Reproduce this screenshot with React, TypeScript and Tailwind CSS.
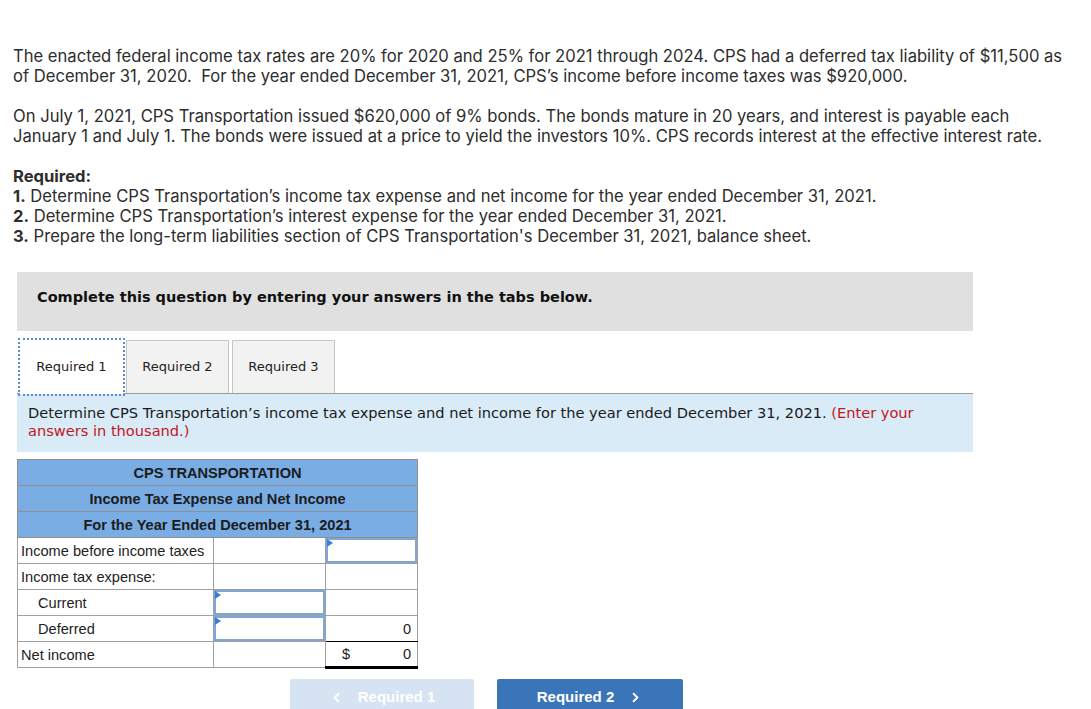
import { ReactNode } from "react";
import { ChevronLeft, ChevronRight } from "lucide-react";

function InputCell() {
  return (
    <div className="relative h-[25px] w-full border-2 border-[#7fa7d6] bg-white">
      <span className="absolute left-[-1px] top-[-1px] h-0 w-0 border-y-[4px] border-l-[6px] border-y-transparent border-l-[#3b7fd4]" />
    </div>
  );
}

function Row({
  label,
  indent,
  mid,
  right,
  rightClass = "border-[#a0a0a0]",
}: {
  label: string;
  indent?: boolean;
  mid?: ReactNode;
  right?: ReactNode;
  rightClass?: string;
}) {
  return (
    <tr className="h-[26px]">
      <td className={`border border-[#a0a0a0] py-0 ${indent ? "pl-[20px]" : "pl-[3px]"}`}>{label}</td>
      <td className="border border-[#a0a0a0] p-0">{mid}</td>
      <td className={`border p-0 ${rightClass}`}>{right}</td>
    </tr>
  );
}

export default function App() {
  return (
    <div className="min-h-screen bg-white pt-[46px] text-[#2d2d2d]">
      <div className="px-[13px] font-['Inter',sans-serif] text-[16.6px] leading-[20px]">
        <p className="whitespace-nowrap">
          The enacted federal income tax rates are 20% for 2020 and 25% for 2021 through 2024. CPS had a deferred tax liability of $11,500 as
          <br />
          of December 31, 2020.&nbsp; For the year ended December 31, 2021, CPS’s income before income taxes was $920,000.
        </p>
        <p className="mt-[20px] whitespace-nowrap">
          On July 1, 2021, CPS Transportation issued $620,000 of 9% bonds. The bonds mature in 20 years, and interest is payable each
          <br />
          January 1 and July 1. The bonds were issued at a price to yield the investors 10%. CPS records interest at the effective interest rate.
        </p>
        <div className="mt-[20px] whitespace-nowrap">
          <p className="font-bold">Required:</p>
          <p>
            <b>1.</b> Determine CPS Transportation’s income tax expense and net income for the year ended December 31, 2021.
          </p>
          <p>
            <b>2.</b> Determine CPS Transportation’s interest expense for the year ended December 31, 2021.
          </p>
          <p>
            <b>3.</b> Prepare the long-term liabilities section of CPS Transportation's December 31, 2021, balance sheet.
          </p>
        </div>
      </div>

      <div className="ml-[17px] w-[956px]">
        <div className="mt-[26px] h-[59px] bg-[#e0e0e0] pl-[20px] pt-[15px] font-['DejaVu_Sans',sans-serif] text-[14.5px] font-bold text-[#111]">
          Complete this question by entering your answers in the tabs below.
        </div>

        <div className="mt-[9px] flex items-end gap-[3px] pl-[3px] font-['DejaVu_Sans',sans-serif] text-[13px] text-[#222]">
          <div className="relative z-10 -mb-px flex h-[54px] w-[103px] items-center justify-center bg-white outline-2 outline-offset-0 outline-dotted outline-[#5b8fd0]">
            Required 1
          </div>
          <div className="flex h-[53px] w-[103px] items-center justify-center border border-b-0 border-[#c6c6c6] bg-[#f2f2f2]">
            Required 2
          </div>
          <div className="flex h-[53px] w-[103px] items-center justify-center border border-b-0 border-[#c6c6c6] bg-[#f2f2f2]">
            Required 3
          </div>
        </div>

        <div className="h-[59px] border-t border-[#9a9a9a] bg-[#daebf8] px-[11px] pt-[10px] font-['DejaVu_Sans',sans-serif] text-[14.6px] leading-[18px] text-[#1a1a1a]">
          Determine CPS Transportation’s income tax expense and net income for the year ended December 31, 2021.{" "}
          <span className="text-[#c0161c]">(Enter your answers in thousand.)</span>
        </div>

        <table className="mt-[7px] w-[400px] table-fixed border-collapse border border-[#808080] font-['Liberation_Sans',Arial,sans-serif] text-[14.6px] leading-[16px] text-[#222]">
          <colgroup>
            <col className="w-[196px]" />
            <col className="w-[112px]" />
            <col className="w-[92px]" />
          </colgroup>
          <thead>
            {["CPS TRANSPORTATION", "Income Tax Expense and Net Income", "For the Year Ended December 31, 2021"].map((h) => (
              <tr key={h} className="h-[26px]">
                <th colSpan={3} className="border border-[#909090] bg-[#79ade4] p-0 text-center font-bold text-[#1c1c1c]">
                  {h}
                </th>
              </tr>
            ))}
          </thead>
          <tbody>
            <Row label="Income before income taxes" right={<InputCell />} />
            <Row label="Income tax expense:" />
            <Row label="Current" indent mid={<InputCell />} />
            <Row
              label="Deferred"
              indent
              mid={<InputCell />}
              rightClass="border-[#a0a0a0] border-b-black"
              right={<div className="pr-[6px] text-right">0</div>}
            />
            <Row
              label="Net income"
              rightClass="border-[#a0a0a0] border-t-black border-b-[3px] border-b-black border-b-double"
              right={
                <div className="flex justify-between pl-[16px] pr-[6px]">
                  <span>$</span>
                  <span>0</span>
                </div>
              }
            />
          </tbody>
        </table>
      </div>

      <div className="mt-[10px] flex w-[973px] justify-center gap-[23px] font-['Liberation_Sans',Arial,sans-serif] text-[15px] font-bold text-white">
        <div className="flex h-[36px] w-[184px] items-center justify-center gap-[14px] rounded-[2px] bg-[#d5e3f2]">
          <ChevronLeft size={15} strokeWidth={3} />
          <span>Required 1</span>
        </div>
        <div className="flex h-[36px] w-[186px] items-center justify-center gap-[14px] rounded-[2px] bg-[#3a75ba]">
          <span>Required 2</span>
          <ChevronRight size={15} strokeWidth={3} />
        </div>
      </div>
    </div>
  );
}
